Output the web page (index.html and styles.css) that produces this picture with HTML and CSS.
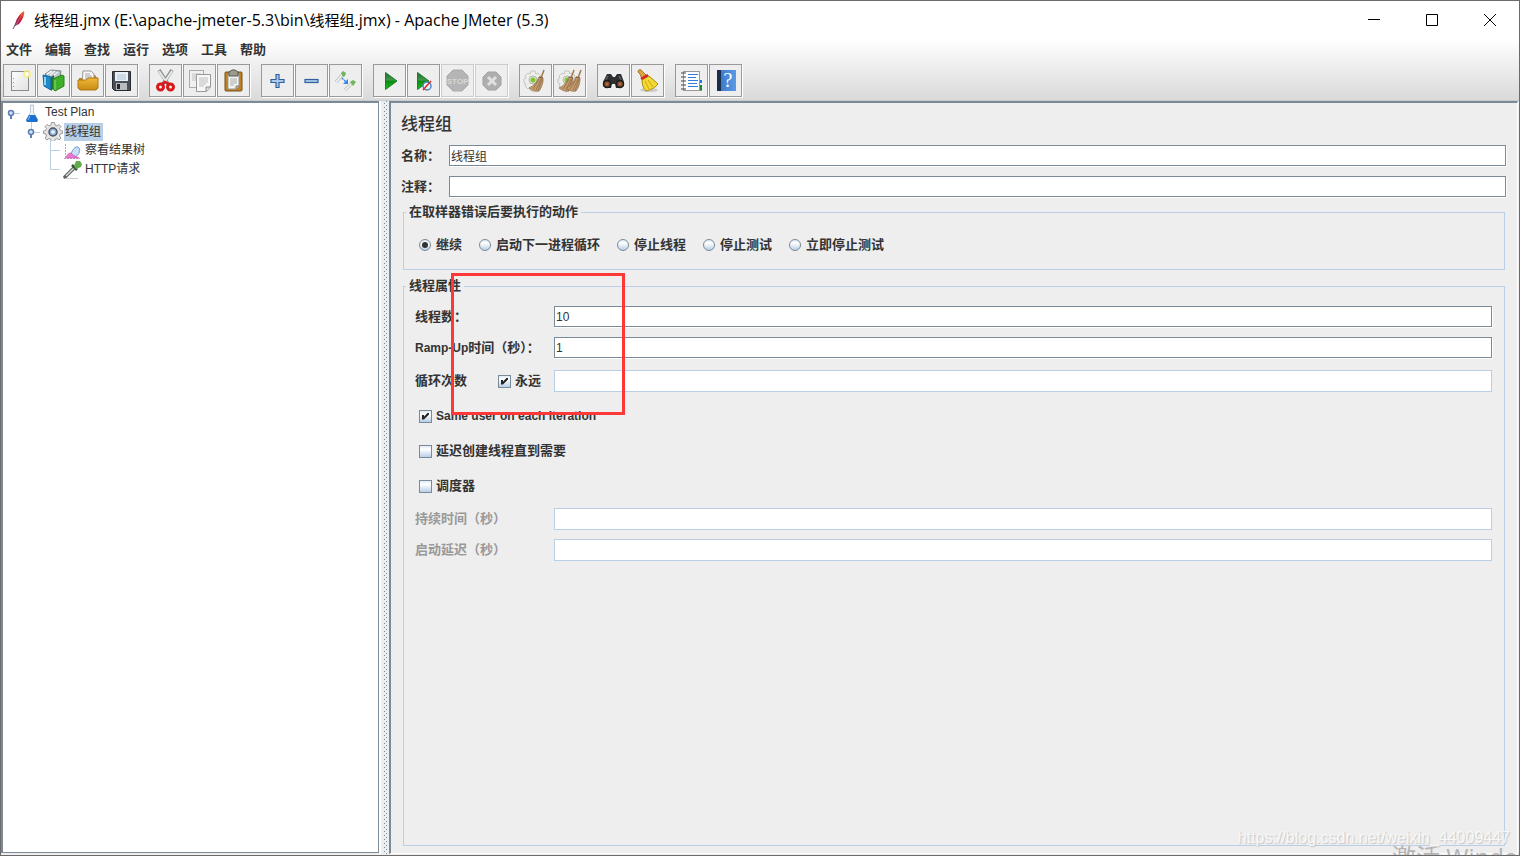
FILE: index.html
```html
<!DOCTYPE html>
<html lang="zh-CN">
<head>
<meta charset="utf-8">
<title>线程组.jmx - Apache JMeter (5.3)</title>
<link rel="stylesheet" href="styles.css">
</head>
<body>
<svg class="defs" width="0" height="0" aria-hidden="true">
  <defs>
    <linearGradient id="gGreen" x1="0" y1="0" x2="0" y2="1"><stop offset="0" stop-color="#1e6e2a"/><stop offset=".45" stop-color="#3f9a46"/><stop offset=".5" stop-color="#0b8a12"/><stop offset="1" stop-color="#12c818"/></linearGradient>
    <linearGradient id="gPage" x1="0" y1="0" x2="1" y2="1"><stop offset="0" stop-color="#fdfdfd"/><stop offset="1" stop-color="#e2e2e2"/></linearGradient>
    <linearGradient id="gGold" x1="0" y1="0" x2="0" y2="1"><stop offset="0" stop-color="#f0b83a"/><stop offset="1" stop-color="#c98a12"/></linearGradient>
    <linearGradient id="gBlue" x1="0" y1="0" x2="1" y2="0"><stop offset="0" stop-color="#3a74c4"/><stop offset="1" stop-color="#5c9be6"/></linearGradient>
    <linearGradient id="gLine" x1="0" y1="0" x2="1" y2="0"><stop offset="0" stop-color="#1560e8"/><stop offset="1" stop-color="#7fb4f4"/></linearGradient>
    <linearGradient id="gFeather" x1="1" y1="0" x2="0" y2="1"><stop offset="0" stop-color="#f0842c"/><stop offset=".4" stop-color="#d0202c"/><stop offset="1" stop-color="#7a2070"/></linearGradient>
    <g id="gearBroom">
      <path d="M8 3h4l1 3 2-1 3 3-1 2 3 1v4l-3 1 1 2-3 3-2-1-1 3H8l-1-3-2 1-3-3 1-2-2-1v-4l2-1-1-2 3-3 2 1z" fill="#eceeea" stroke="#c3c6c0"/>
      <circle cx="10" cy="12" r="4" fill="#dfe5da" stroke="#b4b8b0"/>
      <circle cx="10" cy="12" r="2.500" fill="#7cc82c"/>
    </g>
    <g id="straw">
      <path d="M21 2l-3 8" stroke="#a27a50" stroke-width="1.500"/>
      <path d="M16 9l4 1c0 5-1 9-4 13-4 1-7-1-10-3 5-2 8-6 10-11z" fill="#c39c70" stroke="#96714a" stroke-width=".8"/>
      <path d="M16 11l-6 10M18 11l-5 11M19 11l-4 12" stroke="#8d673e" stroke-width=".7"/>
      <path d="M16 9l4 1" stroke="#7d5a36" stroke-width="1.200"/>
    </g>
  </defs>
</svg>
<div class="window">
  <header class="chrome">
    <div class="titlebar">
      <svg class="feather" viewBox="0 0 16 20"><path d="M13 1c1 3-1 8-5 13l-4 2c0-5 4-12 9-15z" fill="url(#gFeather)"/><path d="M5 13l-3 6" stroke="#65406b" stroke-width="1"/><path d="M11 4L5 15" stroke="#f08a80" stroke-width=".6"/></svg>
      <h1 class="title"><span class="han">线程组</span>.jmx (E:\apache-jmeter-5.3\bin\<span class="han">线程组</span>.jmx) - Apache JMeter (5.3)</h1>
      <button class="winbtn" aria-label="最小化"><svg viewBox="0 0 12 12"><path d="M0 5.500h12"/></svg></button>
      <button class="winbtn" aria-label="最大化"><svg viewBox="0 0 12 12"><path d="M.5.5h11v11H.5z"/></svg></button>
      <button class="winbtn" aria-label="关闭"><svg viewBox="0 0 12 12"><path d="M0 0l12 12M12 0L0 12"/></svg></button>
    </div>
    <nav class="menubar">
      <button>文件</button><button>编辑</button><button>查找</button><button>运行</button><button>选项</button><button>工具</button><button>帮助</button>
    </nav>
    <div class="toolbar">
      <div class="group">
        <button class="tool" aria-label="新建"><svg viewBox="0 0 25 25"><rect x="4.500" y="3.500" width="17" height="19" fill="url(#gPage)" stroke="#8b8b8b"/><path d="M6.500 10v1M6.500 14v1M6.500 18v1" stroke="#999"/><circle cx="20" cy="6" r="4" fill="#f7ee7a" opacity=".75"/><circle cx="20" cy="6" r="2" fill="#fffff0"/></svg></button>
        <button class="tool" aria-label="模板"><svg viewBox="0 0 25 25"><path d="M4 6l6-4 10 1-1 6-8 4z" fill="#b9c4c8" stroke="#78868c"/><path d="M6 6l5-3M9 7l5-4M12 8l5-4" stroke="#eef2f4" stroke-width="1.500"/><path d="M2 7l8 2v13l-7-4z" fill="#1e88c9" stroke="#14659a"/><path d="M4 9v8" stroke="#8fd0f2" stroke-width="2"/><path d="M10 9l3-2v13l-3 3z" fill="#1f6f35"/><path d="M12 11l9-4 2 1v10l-9 5-2-2z" fill="#3fae2a" stroke="#26831a"/><path d="M14 12v10" stroke="#8bdc68"/></svg></button>
        <button class="tool" aria-label="打开"><svg viewBox="0 0 25 25"><path d="M4 10h4V7h12l2 3v10H4z" fill="#b97f1c"/><path d="M8 3h8l3 3v9H7z" fill="#f8f8f8" stroke="#9a9a9a"/><path d="M10 6h5M10 8h7M10 10h7" stroke="#a5a5a5"/><path d="M3 12h8l2-2h10v10l-2 2H5l-2-2z" fill="url(#gGold)" stroke="#ad7615"/></svg></button>
        <button class="tool" aria-label="保存"><svg viewBox="0 0 25 25"><path d="M3.500 3.500h18v19h-16l-2-2z" fill="#4b5056" stroke="#282b2e"/><rect x="6" y="4" width="13" height="9" fill="#e7f1f6"/><path d="M8 7h9M8 9h9M8 11h9" stroke="#adc5d3"/><rect x="7" y="15" width="11" height="7" fill="#b9bcbe"/><rect x="8" y="16" width="3" height="5" fill="#24282b"/></svg></button>
      </div>
      <div class="group">
        <button class="tool" aria-label="剪切"><svg viewBox="0 0 25 25"><path d="M6 2l9 14" stroke="#8c8f90" stroke-width="3.500"/><path d="M19 2l-9 14" stroke="#8c8f90" stroke-width="3.500"/><path d="M6 3l8 12M19 3l-8 12" stroke="#e9eaea" stroke-width="2"/><ellipse cx="7.500" cy="19" rx="3" ry="3" fill="none" stroke="#d7191c" stroke-width="3"/><ellipse cx="17.500" cy="19" rx="3" ry="3" fill="none" stroke="#d7191c" stroke-width="3"/><path d="M9 16l3-2 4 2" fill="none" stroke="#d7191c" stroke-width="2.500"/></svg></button>
        <button class="tool" aria-label="复制"><svg viewBox="0 0 25 25"><rect x="2.500" y="2.500" width="14" height="17" fill="#f1f1f1" stroke="#aaa"/><path d="M5 6h9M5 8h9M5 10h4M5 12h4" stroke="#c2c2c2"/><path d="M9.500 6.500h14V19l-4 4.500h-10z" fill="#f7f7f7" stroke="#999"/><path d="M12 10h9M12 12h9M12 14h9M12 16h7M12 18h5" stroke="#bdbdbd"/><path d="M19 23v-4h4" fill="#ddd" stroke="#8b8b8b"/></svg></button>
        <button class="tool" aria-label="粘贴"><svg viewBox="0 0 25 25"><rect x="4" y="4" width="17" height="19" rx="1" fill="#be8122" stroke="#76501a"/><path d="M7 6h11v12l-3 3H7z" fill="#f5f5f3" stroke="#999"/><path d="M9 11h7M9 13h7M9 15h7M9 17h4" stroke="#a7a7a7"/><path d="M15 21v-3h3" fill="#ccc" stroke="#777"/><path d="M8 4l3-2h3l3 2v4H8z" fill="#9a9c94" stroke="#55584f"/></svg></button>
      </div>
      <div class="group">
        <button class="tool" aria-label="展开"><svg viewBox="0 0 25 25"><path d="M11 6.500h3v5h5v3h-5v5h-3v-5H6v-3h5z" fill="#a9caec" stroke="#315f9f" stroke-width="1.200"/></svg></button>
        <button class="tool" aria-label="折叠"><svg viewBox="0 0 25 25"><rect x="6" y="11.500" width="13" height="3" fill="#a9caec" stroke="#315f9f" stroke-width="1.200"/></svg></button>
        <button class="tool" aria-label="切换"><svg viewBox="0 0 25 25"><path d="M3 14l6-7" stroke="#b4bab1" stroke-width="3"/><path d="M3 14l6-7" stroke="#f7f7f7" stroke-width="1.500"/><path d="M8 5l2-2 3 2-1 3-2 1z" fill="#70b45b"/><path d="M12 22l6-6" stroke="#b4bab1" stroke-width="3"/><path d="M12 22l6-6" stroke="#f7f7f7" stroke-width="1.500"/><path d="M17 14l3-2 3 2-3 4z" fill="#70b45b"/><path d="M9 10l4 4" stroke="#3887e8" stroke-width="1.500" stroke-dasharray="2 1"/><path d="M15 11v5h-5z" fill="#3887e8"/></svg></button>
      </div>
      <div class="group">
        <button class="tool" aria-label="启动"><svg viewBox="0 0 25 25"><path d="M8.500 4.500L20 13 8.500 21.500z" fill="url(#gGreen)" stroke="#247a29"/></svg></button>
        <button class="tool" aria-label="不停顿开始"><svg viewBox="0 0 25 25"><path d="M6.500 4.500L18 13 6.500 21.500z" fill="url(#gGreen)" stroke="#247a29"/><circle cx="16" cy="18" r="4" fill="#e8f1fa" stroke="#4a84bd" stroke-width="1.500"/><path d="M12 22l8-9" stroke="#dd2727" stroke-width="1.500"/></svg></button>
        <button class="tool" aria-label="停止" disabled><svg viewBox="0 0 25 25"><path d="M8 2h9l6 6v9l-6 6H8l-6-6V8z" fill="#b5b5b5" stroke="#aaa"/><text x="12.500" y="16" class="stoptext">STOP</text></svg></button>
        <button class="tool" aria-label="关闭线程" disabled><svg viewBox="0 0 25 25"><path d="M9 4h8l5 5v8l-5 5H9l-5-5V9z" fill="#aeaeae" stroke="#a2a2a2"/><path d="M9 9l8 8M17 9l-8 8" stroke="#e0e0e0" stroke-width="3"/></svg></button>
      </div>
      <div class="group">
        <button class="tool" aria-label="清除"><svg viewBox="0 0 25 25"><use href="#gearBroom"/><use href="#straw"/></svg></button>
        <button class="tool" aria-label="清除全部"><svg viewBox="0 0 25 25"><use href="#gearBroom"/><use href="#straw" x="-4"/><use href="#straw" x="3"/></svg></button>
      </div>
      <div class="group">
        <button class="tool" aria-label="搜索"><svg viewBox="0 0 25 25"><path d="M6 6h4l2 3h2l2-3h4l3 8v4l-4 2h-4l-1-4h-3l-1 4H5l-3-2v-4z" fill="#2d2f31"/><path d="M7 8l-3 6M18 8l3 6" stroke="#777"/><circle cx="6" cy="16" r="3.500" fill="#8a4f30" stroke="#17191b" stroke-width="1.500"/><circle cx="19" cy="16" r="3.500" fill="#8a4f30" stroke="#17191b" stroke-width="1.500"/><path d="M5 16h2M18 16h2" stroke="#d98a55"/></svg></button>
        <button class="tool" aria-label="重置搜索"><svg viewBox="0 0 25 25"><ellipse cx="14" cy="22" rx="9" ry="2" fill="#ccc"/><path d="M3 4c0-3 3-3 4-1l5 5-5 3-2-5z" fill="#e0a23e" stroke="#936018" stroke-width=".8"/><path d="M7 12l7-4 9 8c-2 3-7 6-12 7-3-3-4-7-4-11z" fill="#f4d834" stroke="#a98d0c"/><path d="M10 13l4 8M13 12l5 7" stroke="#c7a60e"/><path d="M6 11l7-4" stroke="#d81f23" stroke-width="2.500"/></svg></button>
      </div>
      <div class="group">
        <button class="tool" aria-label="函数助手"><svg viewBox="0 0 25 25"><path d="M8 22.500h15" stroke="#888"/><path d="M22 12v3" stroke="#1c7ce8" stroke-width="2"/><path d="M22 17v5" stroke="#138a38" stroke-width="2"/><rect x="4.500" y="3.500" width="16" height="19" fill="#fcfcfc" stroke="#999"/><path d="M9 6.500h10M9 9.500h8M9 12.500h10M9 15.500h9M9 18.500h10" stroke="#347cdc"/><path d="M2 5h5M2 9h5M2 13h5M2 17h5M2 21h5" stroke="#444"/></svg></button>
        <button class="tool" aria-label="帮助文档"><svg viewBox="0 0 25 25"><rect x="5" y="2" width="18" height="21" fill="url(#gBlue)"/><rect x="4" y="2" width="4" height="21" fill="#1a2e4c"/><text x="15" y="19" class="helptext">?</text></svg></button>
      </div>
    </div>
  </header>
  <main class="body">
    <aside class="tree">
      <div class="row">
        <svg class="lead" viewBox="0 0 20 19"><path d="M9 10.500h8" stroke="#b8cfe5"/><circle cx="8" cy="10" r="2.500" fill="#d6e4f2" stroke="#5b7fb4" stroke-width="1.500"/><path d="M8 12v4" stroke="#5b7fb4" stroke-width="2"/></svg>
        <svg class="nodeicon" viewBox="0 0 20 19"><path d="M7.500 2h3v7l4 8-1 2h-9l-1-2 4-8z" fill="#eef3f8" stroke="#b0bac4" stroke-width=".8"/><path d="M6 12h6l3 5-1 2H4l-1-2z" fill="#1b6fd0"/><path d="M7 13l-2 4" stroke="#8ec4f6"/></svg>
        <span class="name">Test Plan</span>
      </div>
      <div class="row level1">
        <svg class="lead" viewBox="0 0 20 19"><path d="M8.500 0v7M9 10.500h8" stroke="#b8cfe5"/><circle cx="8" cy="10" r="2.500" fill="#d6e4f2" stroke="#5b7fb4" stroke-width="1.500"/><path d="M8 12v4" stroke="#5b7fb4" stroke-width="2"/></svg>
        <svg class="nodeicon" viewBox="0 0 20 19"><path d="M8.500 .5h3l.5 2.500 2 1 2-1.500 2 2-1.500 2 1 2 2 .5v2.500l-2.500.5-.5 2 1.500 2-2 2-2-1.500-2 1-.5 2.500h-3l-.5-2.500-2-1-2 1.500-2-2 1.500-2-.5-2-2.500-.5V9l2-.5 1-2L2 4.500l2-2L6 4l2-1z" fill="#e4e4e4" stroke="#929292" stroke-width=".9"/><circle cx="10" cy="10" r="4" fill="#8fb0da" stroke="#4d5664" stroke-width="1.500"/><circle cx="10" cy="10" r="1.800" fill="#eef5fc"/></svg>
        <span class="name selected">线程组</span>
      </div>
      <div class="row level2">
        <svg class="lead" viewBox="0 0 20 19"><path d="M7.500 0v19M8 9.500h9" stroke="#b8cfe5"/></svg>
        <svg class="nodeicon" viewBox="0 0 20 19"><path d="M2.500 3v15M1 17.500h16" stroke="#b3a7be" stroke-dasharray="2 1"/><path d="M8 13c2-6 6-9 8-6s-1 8-4 9z" fill="#c9def7" stroke="#6c97d6"/><path d="M3 17c2-6 5-6 7-3l6 3z" fill="#e878cc" stroke="#cf4fb0" stroke-width=".6"/></svg>
        <span class="name">察看结果树</span>
      </div>
      <div class="row level2">
        <svg class="lead" viewBox="0 0 20 19"><path d="M7.500 0v9.500h9" fill="none" stroke="#b8cfe5"/></svg>
        <svg class="nodeicon" viewBox="0 0 20 19"><path d="M2 17l10-10" stroke="#58615a" stroke-width="3.500" stroke-linecap="round"/><path d="M3 16l8-8" stroke="#dfe6e0" stroke-width="1.200"/><path d="M9 5l5 5" stroke="#37543a" stroke-width="2.500"/><path d="M11 6l2-5 4 0 2 3-1 3-5 2z" fill="#61ac4d"/><path d="M2 18.500h13" stroke="#ccc"/></svg>
        <span class="name">HTTP请求</span>
      </div>
    </aside>
    <div class="divider" role="separator"></div>
    <section class="panel">
      <h2 class="heading">线程组</h2>
      <div class="field"><label for="name">名称：</label><input id="name" type="text" value="线程组"></div>
      <div class="field"><label for="comment">注释：</label><input id="comment" type="text"></div>
      <fieldset class="actions">
        <legend>在取样器错误后要执行的动作</legend>
        <div class="radios">
          <label><input type="radio" name="onerror" checked>继续</label>
          <label><input type="radio" name="onerror">启动下一进程循环</label>
          <label><input type="radio" name="onerror">停止线程</label>
          <label><input type="radio" name="onerror">停止测试</label>
          <label><input type="radio" name="onerror">立即停止测试</label>
        </div>
      </fieldset>
      <fieldset class="props">
        <legend>线程属性</legend>
        <div class="prop"><label for="threads">线程数：</label><input id="threads" type="text" value="10"></div>
        <div class="prop"><label for="ramp"><span class="latin">Ramp-Up</span>时间（秒）：</label><input id="ramp" type="text" value="1"></div>
        <div class="prop loop"><span class="looplabel"><label for="loops">循环次数</label><label class="check"><input type="checkbox" checked>永远</label></span><input id="loops" type="text" disabled></div>
        <div class="checks">
          <label class="check"><input type="checkbox" checked><span class="latin">Same user on each iteration</span></label>
          <label class="check"><input type="checkbox">延迟创建线程直到需要</label>
          <label class="check"><input type="checkbox">调度器</label>
        </div>
        <div class="prop off"><label for="duration">持续时间（秒）</label><input id="duration" type="text" disabled></div>
        <div class="prop off"><label for="delay">启动延迟（秒）</label><input id="delay" type="text" disabled></div>
        <div class="highlight"></div>
      </fieldset>
    </section>
  </main>
  <div class="activate">激活 Windows</div>
  <div class="watermark">https://blog.csdn.net/weixin_44009447</div>
</div>
</body>
</html>
```
FILE: styles.css
```css
* { box-sizing: border-box; }

body {
  margin: 0;
  color: #333;
  font: bold 13px/18px "Liberation Sans", "Noto Sans CJK SC", sans-serif;
}

button, input { font: inherit; color: inherit; margin: 0; }
.defs { position: absolute; }

.window {
  position: relative;
  display: flex;
  flex-direction: column;
  height: 100vh;
  overflow: hidden;
  border: 1px solid #6c6a6b;
  background: #eee;
}

/* Title, menu and toolbar share one gradient */
.chrome {
  background: linear-gradient(#fff 38px, #dadada 98px);
  border-bottom: 1px solid #ccc;
}

.titlebar { display: flex; align-items: center; height: 37px; padding-left: 10px; }
.feather { width: 16px; height: 20px; margin-right: 7px; }
.title {
  flex: 1;
  margin: 0;
  color: #000;
  font: 16px/20px "Open Sans", "Noto Sans CJK SC", sans-serif;
}
.han { font-size: 15px; }
.winbtn {
  display: flex;
  align-items: center;
  justify-content: center;
  width: 58px;
  height: 37px;
  padding: 0;
  border: 0;
  background: none;
}
.winbtn svg { width: 12px; height: 12px; fill: none; stroke: #000; }

.menubar { display: flex; gap: 13px; height: 25px; padding: 3px 5px 4px; }
.menubar button { padding: 0; border: 0; background: none; }

.toolbar { display: flex; gap: 11px; padding: 1px 2px 3px; }
.group { display: flex; gap: 1px; }
.tool {
  display: flex;
  align-items: center;
  justify-content: center;
  width: 33px;
  height: 33px;
  padding: 0;
  border: 1px solid #999;
  background: #eee;
  box-shadow: 1px 1px #fff;
}
.tool svg { flex: none; width: 25px; height: 25px; fill: none; }
.tool:disabled { border-color: #ccc; }
.stoptext { font: bold 8px "Liberation Sans", sans-serif; fill: #d8d8d8; text-anchor: middle; }
.helptext { font: 20px "Liberation Serif", serif; fill: #fff; text-anchor: middle; }

.body { display: flex; flex: 1; min-height: 0; padding: 0 1px 1px 0; }

.tree {
  width: 378px;
  border: 1px solid #7a8a99;
  border-width: 2px 1px 1px 2px;
  margin-bottom: 1px;
  background: #fff;
  font-size: 12px;
  font-weight: normal;
}
.row { display: flex; align-items: center; height: 19px; }
.level1 { padding-left: 20px; }
.level2 { padding-left: 40px; }
.lead, .nodeicon { flex: none; width: 20px; height: 19px; fill: none; }
.name { margin-left: 1px; padding: 0 1px; line-height: 17px; }
.selected { padding: 0 2px 0 1px; background: #b8cfe5; line-height: 18px; }

.divider {
  width: 10px;
  border-left: 2px solid #fff;
  background:
    conic-gradient(from 270deg at 1px 1px, #7a8a99 90deg, transparent 0) 3px 2px / 4px 4px,
    conic-gradient(from 270deg at 1px 1px, #7a8a99 90deg, transparent 0) 5px 4px / 4px 4px,
    #eee;
  box-shadow: inset 3px 0 #eee, inset -2px 0 #eee;
}

.panel {
  display: flex;
  flex: 1;
  flex-direction: column;
  min-width: 0;
  padding: 8px 11px 7px 10px;
  border-top: 2px solid #7a8a99;
  border-left: 2px solid #7a8a99;
  border-right: 1px solid #fff;
  border-bottom: 1px solid #fff;
}
.heading { margin: 0 0 10px; font: 500 17px/24px "Noto Sans CJK SC", sans-serif; }

input[type="text"] {
  flex: 1;
  min-width: 0;
  height: 21px;
  padding: 0 1px;
  border: 1px solid #7a8a99;
  border-radius: 0;
  background: #fff;
  box-shadow: 1px 1px #fff;
  font-size: 12px;
  font-weight: normal;
}
input[type="text"]:disabled { height: 22px; border-color: #b8cfe5; box-shadow: none; }

.field { display: flex; align-items: center; margin-bottom: 10px; }
.field label { width: 48px; white-space: nowrap; }

fieldset { margin: 0 1px 0 2px; padding: 0; border: 1px solid #b8cfe5; min-width: 0; }
legend { margin-left: 2px; padding: 0 3px; }

.actions { height: 67px; margin-top: -4px; margin-bottom: 7px; }
.radios { display: flex; gap: 17px; padding: 15px 15px 0; }
.radios label { display: flex; align-items: center; gap: 5px; }

input[type="radio"], input[type="checkbox"] {
  display: grid;
  flex: none;
  place-items: center;
  width: 13px;
  height: 13px;
  appearance: none;
  border: 1px solid #7a8a99;
  background: linear-gradient(#dfeaf5, #fff 30%, #b8cfe5);
}
input[type="radio"] { width: 12px; height: 12px; border-radius: 50%; }
input[type="radio"]:checked::before {
  width: 6px;
  height: 6px;
  border-radius: 50%;
  background: #333;
  content: "";
}
input[type="checkbox"]:checked::before {
  width: 7px;
  height: 7px;
  background: #222;
  clip-path: polygon(0 35%, 28% 35%, 28% 60%, 85% 0, 100% 0, 100% 30%, 28% 100%, 0 100%);
  content: "";
}

.props { position: relative; flex: 1; padding: 0 12px 0 11px; }
.props legend { margin-left: -9px; }
.prop { display: flex; align-items: center; margin-bottom: 10px; }
.prop > :first-child { width: 139px; white-space: nowrap; }
.props legend + .prop { margin-top: 11px; }
.loop { margin: 12px 0 0; }
.looplabel { display: flex; justify-content: space-between; padding-right: 13px; }
.check { display: flex; align-items: center; gap: 4px; }
.latin { font-size: 12px; }
.checks { display: flex; flex-direction: column; gap: 17px; padding: 15px 4px 13px; }
.off { margin-bottom: 9px; color: #999; }

.highlight {
  position: absolute;
  top: -22px;
  left: 47px;
  width: 174px;
  height: 142px;
  border: 3px solid #fc3838;
  pointer-events: none;
}

.activate, .watermark { position: absolute; white-space: nowrap; pointer-events: none; font-weight: normal; }
.activate {
  left: calc(100% - 127px);
  bottom: -20px;
  color: #b4b4b4;
  font: 24px/36px "Open Sans", "Noto Sans CJK SC", sans-serif;
}
.watermark {
  right: 9px;
  bottom: 7px;
  color: #f8f8f8;
  font-size: 16px;
  line-height: 20px;
  text-shadow: 1px 1px 1px #c4c4c4;
}
```
